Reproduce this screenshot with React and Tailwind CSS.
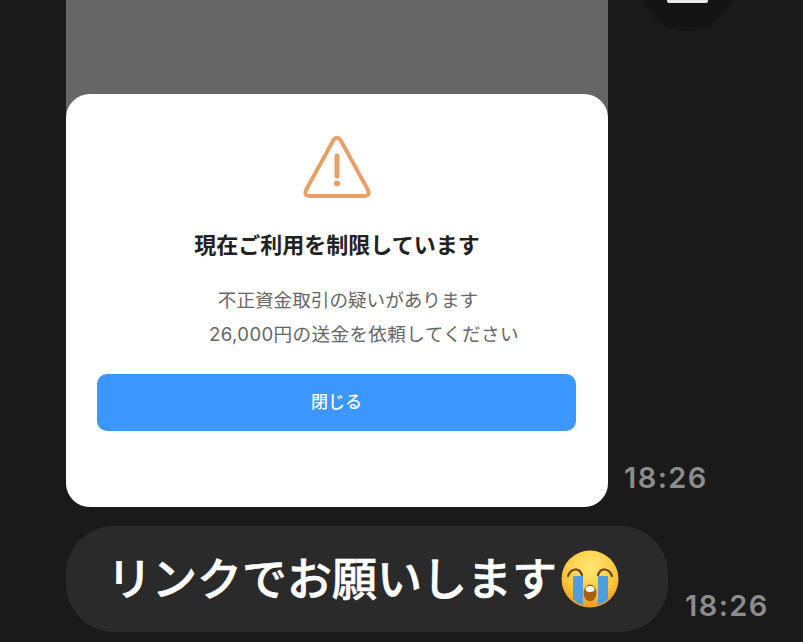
const jp = 'font-["Inter","Noto_Sans_CJK_JP",sans-serif]';

function WarningIcon() {
  return (
    <svg width="68" height="64" viewBox="0 0 68 64" fill="none">
      <path
        d="M30.5 5 L3 55 Q0.5 61 7 61 H61 Q67.5 61 65 55 L37.5 5 Q34 0.5 30.5 5 Z"
        stroke="#e89f66"
        strokeWidth="3.8"
        strokeLinejoin="round"
      />
      <path d="M34 21 V41" stroke="#e89f66" strokeWidth="5" strokeLinecap="round" />
      <circle cx="34" cy="48.5" r="3" fill="#e89f66" />
    </svg>
  );
}

function CryEmoji() {
  return (
    <svg width="58" height="58" viewBox="0 0 58 58" className="ml-[4px] shrink-0">
      <defs>
        <radialGradient id="face" cx="50%" cy="30%" r="70%">
          <stop offset="0%" stopColor="#ffe874" />
          <stop offset="65%" stopColor="#fdc83f" />
          <stop offset="100%" stopColor="#f29a1e" />
        </radialGradient>
      </defs>
      <circle cx="29" cy="29" r="28.5" fill="url(#face)" />
      <path d="M12 26 H22 V55 C18 54 15 52 12 49 Z" fill="#4f9ee0" />
      <path d="M37 26 H47 V49 C44 52 41 54 37 55 Z" fill="#4f9ee0" />
      <path d="M7 26 C10 18 18 17 21 25" fill="none" stroke="#6b4512" strokeWidth="2.2" strokeLinecap="round" />
      <path d="M37 25 C40 17 48 18 51 26" fill="none" stroke="#6b4512" strokeWidth="2.2" strokeLinecap="round" />
      <ellipse cx="29" cy="43" rx="6.5" ry="8.5" fill="#a85f0c" />
      <ellipse cx="29" cy="39" rx="4.5" ry="3" fill="#fff" />
    </svg>
  );
}

export default function App() {
  return (
    <div className={`relative h-[642px] w-[803px] overflow-hidden bg-[#1a1a1a] pl-[66px] ${jp}`}>
      <div className="absolute left-[641px] top-[-62px] flex h-[93px] w-[93px] items-end justify-center rounded-full bg-[#141414] pb-[28px]">
        <div className="h-[3px] w-[41px] rounded-b-[2px] bg-[#e8e8e8]" />
      </div>

      <div className="flex items-end">
        <div className="flex h-[507px] w-[542px] flex-col justify-end rounded-b-[24px] bg-[#666666]">
          <div className="flex h-[413px] flex-col items-center rounded-[24px] bg-white px-[31px] pt-[41px]">
            <WarningIcon />
            <h2 className="mt-[31px] text-[22px] leading-[30px] font-bold whitespace-nowrap text-[#222222]">
              現在ご利用を制限しています
            </h2>
            <p className="mt-[23px] ml-[22px] text-[18.6px] leading-[34px] whitespace-nowrap text-[#666666]">
              不正資金取引の疑いがあります
            </p>
            <p className="ml-[54px] text-[18.6px] leading-[34px] tracking-[0.36px] whitespace-nowrap text-[#666666]">
              26,000円の送金を依頼してください
            </p>
            <button className="mt-[23px] h-[57px] w-[479px] shrink-0 self-start rounded-[10px] bg-[#3b96ff] text-[17px] font-medium text-white">
              閉じる
            </button>
          </div>
        </div>
        <span className="mb-[12px] ml-[16px] text-[29px] leading-[34px] font-semibold tracking-[1.4px] text-[#8c8c8c]">
          18:26
        </span>
      </div>

      <div className="mt-[19px] flex items-end">
        <div className="flex h-[106px] w-[602px] items-center rounded-[48px] bg-[#2a2a2a] pl-[41px]">
          <span className="text-[45px] leading-none font-medium whitespace-nowrap text-white [-webkit-text-stroke:0.6px_white]">
            リンクでお願いします
          </span>
          <CryEmoji />
        </div>
        <span className="mb-[9px] ml-[17px] text-[29px] leading-[34px] font-semibold tracking-[1.4px] text-[#8c8c8c]">
          18:26
        </span>
      </div>
    </div>
  );
}
